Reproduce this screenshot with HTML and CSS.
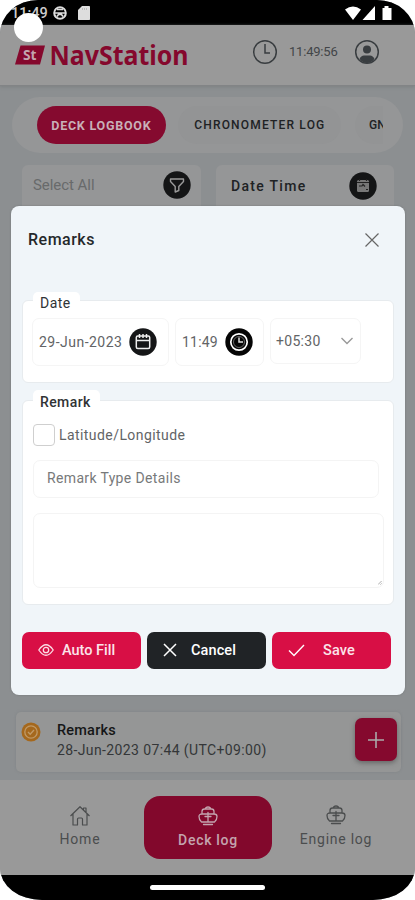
FILE: index.html
```html
<!DOCTYPE html>
<html lang="en">
<head>
<meta charset="utf-8">
<title>NavStation</title>
<link rel="stylesheet" href="styles.css">
</head>
<body>
<svg class="defs" width="0" height="0" aria-hidden="true">
  <symbol id="ship" viewBox="0 0 20 20">
    <g fill="none" stroke="currentColor" stroke-width="1.300" stroke-linecap="round" stroke-linejoin="round">
      <path d="M7.500 3Q7.500 1 10 1t2.500 2M4 8V5.500Q4 3 6.500 3h7Q16 3 16 5.500V8M4 8Q1 8 1 10.500 1 14 3.500 16h13Q19 14 19 10.500 19 8 16 8ZM10 6.500V16M7 10.500h6M5.500 18.500h9"/>
    </g>
  </symbol>
</svg>
<div class="phone">
  <div class="status">
    <span class="status-time">11:49</span>
    <svg class="ball" width="14" height="14" viewBox="0 0 14 14"><circle cx="7" cy="7" r="5.800" fill="none" stroke="#ddd" stroke-width="2"/><path d="M1.500 7h11M4 10.500 5.500 8.500h3l1.500 2M4 3.500h6" stroke="#ddd" stroke-width="1.700" fill="none"/></svg>
    <svg class="sd" width="12" height="14" viewBox="0 0 12 14"><path d="M4 0h7.300q.7 0 .7.700v12.600q0 .7-.7.700H.7Q0 14 0 13.300V4Z" fill="#ddd"/><path d="M4.500 2v2M6.500 2v2M8.500 2v2" stroke="#bbb"/></svg>
    <svg class="signals" width="48" height="15" viewBox="0 0 48 15"><path d="M0 3.500Q8 -2.500 16 3.500L8 14ZM30 0v14H17.500ZM39.500 0h4v2h3v12h-9V2h2Z" fill="#fff"/></svg>
  </div>
  <header class="header">
    <svg class="logo" width="174" height="30" viewBox="0 0 174 30">
      <path d="M5.500 4.500H30L25 23.500H0Z" fill="#85082d"/>
      <text class="logo-mark" x="8" y="19" textLength="13.500" lengthAdjust="spacingAndGlyphs">St</text>
      <text class="logo-name" x="34.500" y="23.500" textLength="139" lengthAdjust="spacingAndGlyphs">NavStation</text>
    </svg>
    <svg class="head-clock" width="26" height="26" viewBox="0 0 26 26"><circle cx="13" cy="13" r="11.300" fill="none" stroke="#393d40" stroke-width="1.500"/><path d="M13 5v9h5" fill="none" stroke="#393d40" stroke-width="1.500"/></svg>
    <span class="head-time">11:49:56</span>
    <svg class="head-user" width="26" height="26" viewBox="0 0 26 26"><circle cx="13" cy="13" r="11.300" fill="none" stroke="#393d40" stroke-width="1.500"/><circle cx="13" cy="10.500" r="4" fill="#393d40"/><path d="M5.500 20Q7 16.500 10 16.500h6q3 0 4.500 3.500Q17.500 24 13 24T5.500 20Z" fill="#393d40"/></svg>
  </header>
  <main class="content">
    <nav class="tabs">
      <span class="tab tab-active">DECK LOGBOOK</span>
      <span class="tab tab-chrono">CHRONOMETER LOG</span>
      <span class="tab tab-cut"><span class="cut-text">GN</span></span>
    </nav>
    <div class="filters">
      <div class="filter">
        <span class="select-text">Select All</span>
        <svg width="28" height="28" viewBox="0 0 28 28"><circle cx="14" cy="14" r="13.700" fill="#141516"/><path d="M7.500 8h13v2.500l-4.700 5v4l-3.600 1.500v-5.500l-4.700-5Z" fill="none" stroke="#999" stroke-width="1.400" stroke-linejoin="round"/></svg>
      </div>
      <div class="filter filter-date">
        <span class="date-text">Date Time</span>
        <svg width="28" height="28" viewBox="0 0 28 28"><circle cx="14" cy="14" r="13.700" fill="#141516"/><rect x="8" y="8" width="12" height="12" rx="1.500" fill="#777"/><path d="M8 10.500h12M10 14h3l1-1.500 2 2M17 17.500h2M10.500 7v2M17.500 7v2" stroke="#222" stroke-width="1.200" fill="none"/></svg>
      </div>
    </div>
    <div class="entry">
      <svg class="entry-icon" width="20" height="20" viewBox="0 0 20 20"><circle cx="10" cy="10" r="9.500" fill="#a5681d"/><circle cx="10" cy="10" r="6.200" fill="none" stroke="#c09a68" stroke-width="1.300"/><path d="m7 10 2.200 2.300L13 8" fill="none" stroke="#c09a68" stroke-width="1.300"/></svg>
      <div class="entry-copy"><div class="entry-title">Remarks</div><div class="entry-date">28-Jun-2023 07:44 (UTC+09:00)</div></div>
      <div class="add"><svg width="18" height="18" viewBox="0 0 18 18"><path d="M9 1v16M1 9h16" stroke="#aaa" stroke-width="1.600"/></svg></div>
    </div>
  </main>
  <nav class="bottom">
    <div class="dest"><svg width="22" height="22" viewBox="0 0 22 22"><path d="M1.500 11 11 1.700 20.500 11M4 9v11h4.500v-6q0-1 1-1h3q1 0 1 1v6H18V9M14.500 4.500V3H17v4" fill="none" stroke="#4b4d4e" stroke-width="1.200" stroke-linejoin="round"/></svg><span class="home-text">Home</span></div>
    <div class="dest dest-active"><svg width="20" height="20"><use href="#ship"/></svg><span class="deck-text">Deck log</span></div>
    <div class="dest"><svg width="20" height="20"><use href="#ship"/></svg><span class="engine-text">Engine log</span></div>
  </nav>
  <div class="gesture"><span class="gesture-bar"></span></div>

  <section class="modal">
    <div class="modal-head"><span class="modal-title">Remarks</span><svg width="16" height="16" viewBox="0 0 16 16"><path d="m1.500 1.500 13 13m0-13-13 13" stroke="#666" stroke-width="1.200"/></svg></div>
    <div class="group group-date">
      <span class="legend">Date</span>
      <div class="date-fields">
        <div class="field field-day"><span class="day-text">29-Jun-2023</span><svg width="28" height="28" viewBox="0 0 28 28"><circle cx="14" cy="14" r="13.700" fill="#151617"/><rect x="7.300" y="8" width="13.400" height="12.500" rx="1.500" fill="none" stroke="#eee" stroke-width="1.500"/><path d="M7.500 12.500h13M10.500 6v4M14 6v4M17.500 6v4" stroke="#eee" stroke-width="1.500"/></svg></div>
        <div class="field field-time"><span class="time-text">11:49</span><svg width="28" height="28" viewBox="0 0 28 28"><circle cx="14" cy="14" r="13.700" fill="#050505"/><circle cx="14" cy="14" r="8.200" fill="none" stroke="#fff" stroke-width="1.700"/><circle cx="14" cy="14" r="5.500" fill="none" stroke="#666" stroke-width="1"/><path d="M14 9.500V14h4" fill="none" stroke="#ddd" stroke-width="1.500"/></svg></div>
        <div class="field field-zone"><span class="zone-text">+05:30</span><svg width="14" height="10" viewBox="0 0 14 10"><path d="m1.500 2 5.500 5.500L12.500 2" fill="none" stroke="#999" stroke-width="1.400"/></svg></div>
      </div>
    </div>
    <div class="group group-remark">
      <span class="legend legend-remark">Remark</span>
      <div class="check-row"><span class="checkbox"></span><span class="check-text">Latitude/Longitude</span></div>
      <div class="input"><span class="input-text">Remark Type Details</span></div>
      <div class="textarea"><svg width="4" height="4" viewBox="0 0 5 5"><path d="M0 4.500 4.500 0M3 4.500 4.500 3" stroke="#999"/></svg></div>
    </div>
    <div class="actions">
      <div class="btn"><svg width="16" height="14" viewBox="0 0 16 14"><path d="M.8 7Q8-3.500 15.200 7 8 17.500.8 7Z" fill="none" stroke="#fbdde5" stroke-width="1.300"/><circle cx="8" cy="7" r="2.700" fill="none" stroke="#fbdde5" stroke-width="1.300"/></svg><span class="fill-text">Auto Fill</span></div>
      <div class="btn btn-dark"><svg width="14" height="14" viewBox="0 0 14 14"><path d="m1 1 12 12M13 1 1 13" stroke="#fff" stroke-width="1.500"/></svg><span class="cancel-text">Cancel</span></div>
      <div class="btn"><svg width="17" height="14" viewBox="0 0 17 14"><path d="m1 7.500 5 5L16 2" fill="none" stroke="#fff" stroke-width="1.400"/></svg><span class="save-text">Save</span></div>
    </div>
  </section>
</div>
<span class="touch"></span>
</body>
</html>
```

FILE: styles.css
```css
* { box-sizing: border-box; }
body { margin: 0; background: #fff; font-family: Roboto, "Liberation Sans", sans-serif; }
svg { display: block; flex: none; }
span, .entry-title, .entry-date { white-space: nowrap; }
.defs { position: absolute; }
.phone { position: relative; display: flex; flex-direction: column; width: 415px; height: 900px; overflow: hidden; border-radius: 38px 38px 42px 42px / 34px 34px 32px 32px; background: #8c8f91; }
.touch { position: absolute; left: 14px; top: 13px; width: 29px; height: 29px; border-radius: 50%; background: #fff; }

.status { display: flex; height: 25px; padding: 6px 28px 0 11px; background: #000; }
.status-time { width: 42px; color: #ccc; font-size: 14.500px; font-weight: 500; line-height: 15px; }
.sd { margin-left: 11px; }
.signals { margin-left: auto; margin-right: -6px; }

.header { display: flex; align-items: center; height: 61px; padding: 0 35px 6px 15px; background: #999; border-bottom: 1px solid #828486; box-shadow: 0 1px 3px #7d8082; position: relative; }
.logo { margin-top: 8px; overflow: visible; }
.logo-mark { fill: #c3a5af; font: bold 14px "Open Sans", sans-serif; }
.logo-name { fill: #85082d; font: bold 26.500px "Noto Sans", "Open Sans", sans-serif; }
.head-clock { margin-left: 63px; }
.head-time { width: 64px; margin-left: 11px; color: #424548; font-size: 13px; line-height: 16px; letter-spacing: -.2px; }
.head-user { margin-left: auto; }

.content { display: flex; flex-direction: column; height: 694px; padding: 11px 12px 0; }
.tabs { display: flex; align-items: center; height: 56px; padding: 0 20px 0 25px; border-radius: 28px; background: #959697; }
.tab { display: flex; align-items: center; justify-content: center; height: 38px; border-radius: 19px; font-size: 12px; font-weight: 500; color: #202224; background: #939495; }
.tab-active { width: 129px; background: #850a2f; color: #c9b0b8; font-size: 12.500px; letter-spacing: .75px; font-weight: 700; }
.tab-chrono { width: 164px; margin-left: 12px; padding-left: 1px; letter-spacing: 1.180px; }
.tab-cut { width: 28px; margin-left: 14px; justify-content: flex-end; border-radius: 19px 0 0 19px; }
.cut-text { width: 14px; overflow: hidden; }
.filters { display: flex; gap: 15px; margin: 12px 9px 0 10px; }
.filter { display: flex; align-items: center; justify-content: space-between; width: 179px; height: 43px; padding: 0 10px 3px 11px; border-radius: 6px 6px 0 0; background: #959697; }
.filter-date { width: 178px; padding: 0 17px 2px 15px; }
.select-text { color: #686a6b; font-size: 15px; letter-spacing: -.05px; }
.date-text { color: #202224; font-size: 14px; font-weight: 500; letter-spacing: 1.300px; }

.entry { display: flex; align-items: flex-start; height: 60px; margin: auto 2px 8px 4px; padding: 6px 2px 0 5px; border-radius: 5px; background: #959696; box-shadow: 0 0 3px #818486; }
.entry-icon { margin-top: 4px; }
.entry-copy { margin: 3px 0 0 16px; }
.entry-title { color: #151617; font-size: 14.500px; font-weight: 500; line-height: 20px; letter-spacing: .2px; }
.entry-date { color: #343638; font-size: 14px; line-height: 19px; letter-spacing: .38px; }
.add { display: flex; align-items: center; justify-content: center; width: 42px; height: 43px; margin-left: auto; margin-right: 2px; border-radius: 7px; background: #85092e; box-shadow: 0 2px 5px #666; }

.bottom { display: flex; align-items: center; justify-content: space-between; height: 95px; padding: 0 15px 0 16px; background: #999; }
.dest { display: flex; flex-direction: column; align-items: center; width: 128px; height: 63px; padding-top: 9px; color: #4b4d4e; font-size: 14px; line-height: 20px; }
.dest svg + span { margin-top: 3px; }
.dest-active { padding-top: 10px; border-radius: 16px; background: #82082c; color: #c4a4ae; font-weight: 500; }
.dest-active svg + span { margin-top: 4px; }
.home-text { letter-spacing: .85px; margin-top: 2px; }
.deck-text { letter-spacing: .7px; }
.dest svg + .home-text { margin-top: 2px; }
.dest svg + .engine-text { margin-top: 4px; }
.engine-text { letter-spacing: .75px; }
.gesture { display: flex; justify-content: center; height: 25px; padding-top: 10px; background: #000; }
.gesture-bar { width: 115px; height: 5px; border-radius: 3px; background: #fff; }

.modal { position: absolute; left: 11px; top: 206px; width: 394px; height: 489px; padding: 0 11px; border-radius: 8px; background: #f0f5f9; box-shadow: 0 0 2px #6f7274; }
.modal-head { display: flex; align-items: center; justify-content: space-between; height: 94px; padding: 0 14px 27px 6px; }
.modal-title { color: #25282b; font-size: 16px; font-weight: 500; letter-spacing: .5px; }
.group { position: relative; border: 1px solid #e7ebee; border-radius: 6px; background: #fff; }
.group-date { height: 83px; padding: 17px 9px 0; }
.group-remark { height: 205px; margin-top: 17px; padding: 22px 9px 0 10px; }
.legend { position: absolute; left: 10px; top: -9px; width: 47px; height: 22px; padding-left: 7px; border-radius: 5px 5px 0 0; background: #fff; color: #303335; font-size: 14px; line-height: 23px; letter-spacing: .45px; }
.legend-remark { top: -11px; width: 67px; line-height: 24px; font-weight: 500; letter-spacing: .4px; }
.date-fields { display: flex; gap: 6px; }
.field { display: flex; align-items: center; justify-content: space-between; height: 48px; border: 1px solid #f5f5f5; border-radius: 7px; color: #626466; font-size: 14px; }
.field-day { width: 137px; padding: 0 11px 1px 6px; letter-spacing: .48px; }
.field-time { width: 89px; padding: 0 10px 1px 6px; letter-spacing: .2px; }
.field-zone { width: 91px; height: 46px; padding: 0 6px 0 5px; letter-spacing: .3px; }
.check-row { display: flex; align-items: center; height: 23px; gap: 4px; }
.checkbox { width: 22px; height: 22px; border: 1px solid #cfcfcf; border-radius: 4px; }
.check-text { color: #626466; font-size: 14px; line-height: 23px; letter-spacing: .43px; padding-top: 2px; }
.input { display: flex; align-items: center; width: 346px; height: 38px; margin-top: 14px; padding: 0 13px 2px; border: 1px solid #f4f4f4; border-radius: 7px; color: #77797a; font-size: 14px; letter-spacing: .35px; }
.textarea { display: flex; align-items: flex-end; justify-content: flex-end; width: 351px; height: 75px; margin-top: 15px; padding: 2px 1px; border: 1px solid #f4f4f4; border-radius: 7px; }
.actions { display: flex; gap: 6px; margin-top: 27px; }
.btn { display: flex; align-items: center; width: 119px; height: 37px; padding: 0 15px 1px 16px; border-radius: 7px; background: #d80f45; color: #fbe4ea; font-size: 14.500px; font-weight: 500; }
.btn-dark { background: #202326; color: #fff; }
.fill-text { margin-left: 8px; }
.cancel-text { margin-left: 14px; letter-spacing: .1px; }
.save-text { margin-left: 18px; letter-spacing: .1px; }
```
